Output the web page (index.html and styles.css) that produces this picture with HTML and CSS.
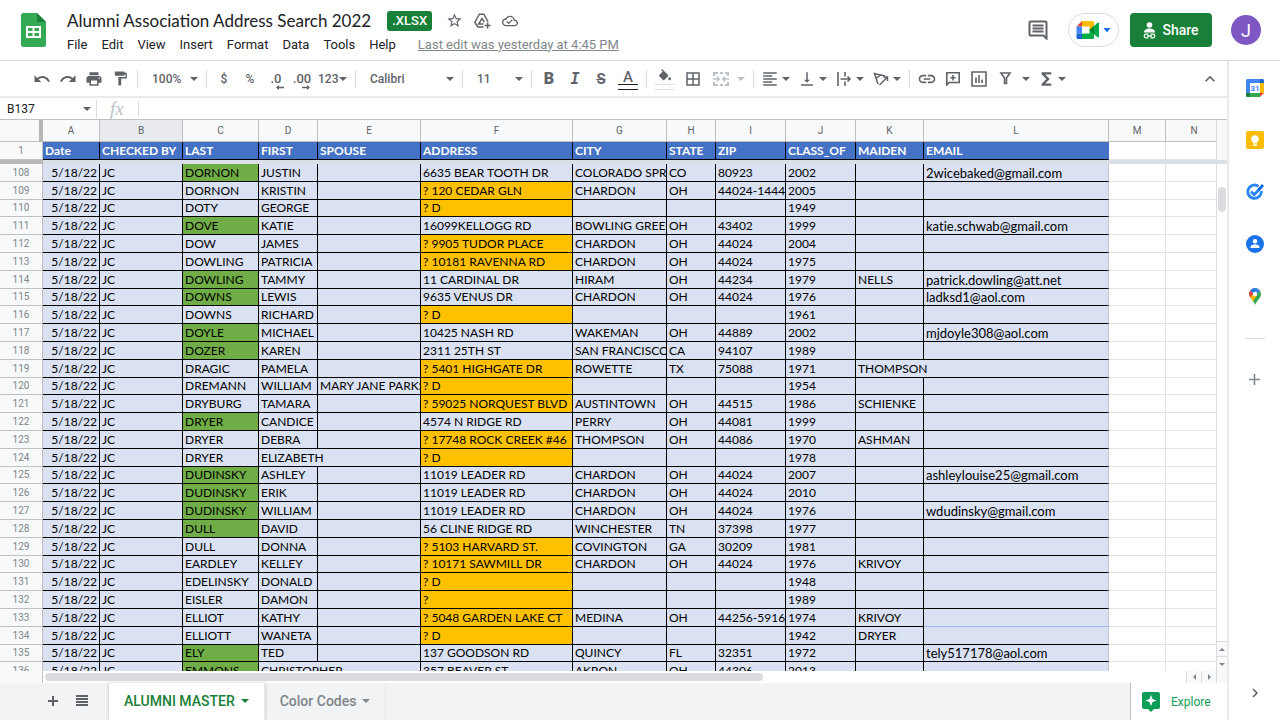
FILE: index.html
```html
<!DOCTYPE html>
<html lang="en">
<head>
  <meta charset="UTF-8"/>
  <title>Alumni Association Address Search 2022</title>
  <link rel="stylesheet" href="styles.css">
</head>
<body>

  <header class="header">
    <a href="#" class="logo" aria-label="Sheets home">
      <svg width="25" height="34" viewBox="0 0 25 34">
        <path fill="#34a853" d="M2.500 0H16l9 9v22.500a2.500 2.500 0 0 1-2.500 2.500h-20A2.500 2.500 0 0 1 0 31.500v-29A2.500 2.500 0 0 1 2.500 0z"/>
        <path fill="#188038" d="M16 0l9 9h-9z"/>
        <path fill="#fff" fill-rule="evenodd" d="M5 13h15v12H5zM7 15v3h4.500v-3zm6.500 0v3H18v-3zM7 20v3h4.500v-3zm6.500 0v3H18v-3z"/>
      </svg>
    </a>
    <div class="doc">
      <div class="doc-row">
        <h1>Alumni Association Address Search 2022</h1>
        <span class="badge">.XLSX</span>
        <button class="doc-btn" aria-label="Star">
          <svg width="17" height="17" viewBox="0 0 24 24"><path d="M22 9.240l-7.190-.62L12 2 9.190 8.630 2 9.240l5.460 4.730L5.820 21 12 17.270 18.180 21l-1.630-7.030L22 9.240zM12 15.400l-3.760 2.270 1-4.280-3.320-2.880 4.380-.38L12 6.100l1.710 4.040 4.380.38-3.320 2.880 1 4.280L12 15.400z"/></svg>
        </button>
        <button class="doc-btn" aria-label="Add shortcut to Drive">
          <svg width="18" height="18" viewBox="0 0 24 24" fill="none" stroke="#5f6368" stroke-width="2"><path d="M14 20H6.500L2.500 14 8.500 3h6l5.500 10"/><path d="M14 16H7.500L12 8.500l3 5" /><path d="M19.500 14v8M15.500 18h8"/></svg>
        </button>
        <button class="doc-btn" aria-label="Saved to Drive">
          <svg width="16" height="16" viewBox="0 0 24 24"><path d="M19.350 10.040C18.670 6.590 15.640 4 12 4 9.110 4 6.600 5.640 5.350 8.040 2.340 8.360 0 10.910 0 14c0 3.310 2.690 6 6 6h13c2.760 0 5-2.240 5-5 0-2.640-2.050-4.780-4.650-4.960zM19 18H6c-2.210 0-4-1.790-4-4 0-2.050 1.530-3.760 3.560-3.970l1.070-.11.5-.95C8.080 7.140 9.940 6 12 6c2.620 0 4.880 1.860 5.390 4.430l.3 1.500 1.530.11c1.560.1 2.780 1.410 2.780 2.960 0 1.650-1.350 3-3 3zm-9-3.820l-2.090-2.090L6.500 13.500 10 17l6.010-6.010-1.410-1.410z"/></svg>
        </button>
      </div>
      <nav class="menu">
        <button>File</button>
        <button>Edit</button>
        <button>View</button>
        <button>Insert</button>
        <button>Format</button>
        <button>Data</button>
        <button>Tools</button>
        <button>Help</button>
        <a href="#">Last edit was yesterday at 4:45 PM</a>
      </nav>
    </div>
    <div class="header-right">
      <button class="comments" aria-label="Open comment history">
        <svg width="20" height="20" viewBox="0 0 20 20" fill="none" stroke="#5f6368" stroke-width="2"><path d="M18.500 18.500l-3-3h-13a1 1 0 0 1-1-1v-12a1 1 0 0 1 1-1h15a1 1 0 0 1 1 1z"/><path d="M4.500 5.500h11M4.500 8.500h11M4.500 11.500h11"/></svg>
      </button>
      <button class="meet" aria-label="Join a call">
        <svg width="24" height="20" viewBox="0 0 24 20">
          <path fill="#ea4335" d="M0.500 6.500L6 1v5.500z"/>
          <path fill="#fbbc04" d="M6 1h10.500A1.500 1.500 0 0 1 18 2.500v6l-4.500 2v-4H6z"/>
          <path fill="#4285f4" d="M.5 6.500H6v7H.5z"/>
          <path fill="#1967d2" d="M.5 13.500H6V19H2a1.500 1.500 0 0 1-1.500-1.500z"/>
          <path fill="#00ac47" d="M6 13.500h7.500v-4L18 6l3.500-3.200c.6-.5 1.500-.1 1.500.7v13c0 .8-.9 1.200-1.500.7L18 14.200v3.300a1.500 1.500 0 0 1-1.500 1.500H6z"/>
          <path fill="#00832d" d="M13.500 10L18 6v8.200z"/>
        </svg>
        <svg width="8" height="5" viewBox="0 0 8 5"><path fill="#1a73e8" d="M.5 0h7L4 4.500z"/></svg>
      </button>
      <button class="share">
        <svg width="13" height="17" viewBox="0 0 13 17" fill="none"><circle cx="6.500" cy="3" r="2.800" fill="#fff"/><path fill="#fff" d="M1 10.500C1 7.500 4 6.500 6.500 6.500s5.500 1 5.500 4z"/><path stroke="#fff" stroke-width="1.300" d="M5.500 12.200H3a1.800 1.800 0 0 0 0 3.600h2.500M7.500 12.200H10a1.800 1.800 0 0 1 0 3.600H7.500M4 14h5"/></svg>
        Share
      </button>
      <button class="avatar" aria-label="Account">J</button>
    </div>
  </header>

  <div class="main">
    <div class="sheet">

      <div class="toolbar">
        <button aria-label="Undo"><svg width="18" height="18" viewBox="0 0 24 24"><path d="M12.500 8c-2.650 0-5.050.99-6.900 2.600L2 7v9h9l-3.620-3.620c1.390-1.160 3.160-1.880 5.120-1.880 3.540 0 6.550 2.310 7.600 5.500l2.370-.78C21.080 11.030 17.150 8 12.500 8z"/></svg></button>
        <button aria-label="Redo"><svg width="18" height="18" viewBox="0 0 24 24"><path d="M18.400 10.600C16.550 8.990 14.150 8 11.500 8c-4.650 0-8.580 3.030-9.960 7.220L3.900 16c1.050-3.190 4.050-5.500 7.600-5.500 1.950 0 3.730.72 5.120 1.880L13 16h9V7l-3.600 3.600z"/></svg></button>
        <button aria-label="Print"><svg width="18" height="18" viewBox="0 0 24 24"><path d="M19 8H5c-1.660 0-3 1.340-3 3v6h4v4h12v-4h4v-6c0-1.660-1.340-3-3-3zm-3 11H8v-5h8v5zm3-7c-.55 0-1-.45-1-1s.45-1 1-1 1 .45 1 1-.45 1-1 1zm-1-9H6v4h12V3z"/></svg></button>
        <button aria-label="Paint format"><svg width="17" height="17" viewBox="0 0 24 24"><path d="M18 4V3c0-.55-.45-1-1-1H5c-.55 0-1 .45-1 1v4c0 .55.45 1 1 1h12c.55 0 1-.45 1-1V6h1v4H9v11c0 .55.45 1 1 1h2c.55 0 1-.45 1-1v-9h8V4h-3z"/></svg></button>
        <span class="sep"></span>
        <select class="zoom" aria-label="Zoom"><option>100%</option></select>
        <span class="sep"></span>
        <button aria-label="Currency">$</button>
        <button aria-label="Percent">%</button>
        <button class="decimal" aria-label="Decrease decimal places">.0<svg width="8" height="5" viewBox="0 0 8 5"><path d="M0 2.500L3 0v1.700h5v1.600H3V5z"/></svg></button>
        <button class="decimal" aria-label="Increase decimal places">.00<svg width="8" height="5" viewBox="0 0 8 5"><path d="M8 2.500L5 0v1.700H0v1.600h5V5z"/></svg></button>
        <button class="split" aria-label="More formats">123<i class="arrow"></i></button>
        <span class="sep"></span>
        <select class="font" aria-label="Font"><option>Calibri</option></select>
        <span class="sep"></span>
        <select class="size" aria-label="Font size"><option>11</option></select>
        <span class="sep"></span>
        <button class="bold" aria-label="Bold">B</button>
        <button class="italic" aria-label="Italic">I</button>
        <button class="strike" aria-label="Strikethrough">S</button>
        <button class="color text-color" aria-label="Text color">A</button>
        <span class="sep"></span>
        <button class="color fill-color" aria-label="Fill color"><svg width="16" height="16" viewBox="0 0 24 24"><path d="M16.560 8.940L7.620 0 6.210 1.410l2.380 2.380-5.150 5.150c-.59.59-.59 1.540 0 2.120l5.500 5.500c.29.29.68.44 1.060.44s.77-.15 1.060-.44l5.500-5.500c.59-.58.59-1.530 0-2.120zM19 11.500s-2 2.170-2 3.500c0 1.100.9 2 2 2s2-.9 2-2c0-1.330-2-3.500-2-3.500z"/></svg></button>
        <button class="borders" aria-label="Borders"><svg width="18" height="18" viewBox="0 0 24 24"><path d="M3 3v18h18V3H3zm8 16H5v-6h6v6zm0-8H5V5h6v6zm8 8h-6v-6h6v6zm0-8h-6V5h6v6z"/></svg></button>
        <button class="split wide" disabled aria-label="Merge cells"><svg width="16" height="14" viewBox="0 0 16 14" fill="none" stroke="#bdc1c6" stroke-width="2"><path d="M1 4V1h4M7 1h3M12 1h3v3M1 10v3h4M7 13h3M12 13h3v-3"/><path stroke-width="1.500" d="M0 7h6M4 4.700L6.200 7 4 9.300M16 7h-6M12 4.700L9.800 7l2.200 2.300"/></svg><i class="arrow"></i></button>
        <span class="sep"></span>
        <div class="group">
          <button class="split" aria-label="Horizontal align"><svg width="18" height="18" viewBox="0 0 24 24"><path d="M15 15H3v2h12v-2zm0-8H3v2h12V7zM3 13h18v-2H3v2zm0 8h18v-2H3v2zM3 3v2h18V3H3z"/></svg><i class="arrow"></i></button>
          <button class="split" aria-label="Vertical align"><svg width="18" height="18" viewBox="0 0 24 24"><path d="M16 13h-3V3h-2v10H8l4 4 4-4zM4 19v2h16v-2H4z"/></svg><i class="arrow"></i></button>
          <button class="split" aria-label="Text wrapping"><svg width="18" height="14" viewBox="-2 0 18 14" fill="none" stroke="#5f6368" stroke-width="1.600"><path d="M1 0v14M8 0v4.500M8 9.500V14M3.500 7H13M10.500 4.500L13 7l-2.500 2.500"/></svg><i class="arrow"></i></button>
          <button class="split" aria-label="Text rotation"><svg width="18" height="14" viewBox="-1 0 18 14" fill="none" stroke="#5f6368" stroke-width="1.500"><path d="M5 12L1.500 1.500 12 4M3 6.500L7.500 3M6.500 13L14 5.500M10.500 5H14.500v4"/></svg><i class="arrow"></i></button>
        </div>
        <span class="sep"></span>
        <button aria-label="Insert link"><svg width="20" height="20" viewBox="0 0 24 24"><path d="M3.900 12c0-1.710 1.390-3.100 3.100-3.100h4V7H7c-2.760 0-5 2.240-5 5s2.240 5 5 5h4v-1.900H7c-1.710 0-3.100-1.390-3.100-3.100zM8 13h8v-2H8v2zm9-6h-4v1.900h4c1.710 0 3.100 1.390 3.100 3.100s-1.390 3.100-3.100 3.100h-4V17h4c2.760 0 5-2.240 5-5s-2.240-5-5-5z"/></svg></button>
        <button aria-label="Insert comment"><svg width="14" height="14" viewBox="0 0 14 14" fill="none" stroke="#5f6368" stroke-width="1.600"><path d="M.8 13V.8h12.400v9.700H3zM7 3v5.400M4.300 5.700h5.400"/></svg></button>
        <button aria-label="Insert chart"><svg width="16" height="16" viewBox="0 0 16 16" fill="none" stroke="#5f6368" stroke-width="1.600"><path d="M1 1h14v14H1zM5 6.500V12M8 4v8M11 8.500V12"/></svg></button>
        <button class="split wide" aria-label="Create a filter"><svg width="14" height="13" viewBox="0 0 14 13" fill="none" stroke="#5f6368" stroke-width="1.600"><path d="M3 1h9L8.500 6v5.500h-2V6z"/></svg><i class="arrow"></i></button>
        <button class="split" aria-label="Functions"><svg width="18" height="18" viewBox="0 0 24 24"><path d="M19 3H6v2.500l6.500 6.500L6 18.500V21h13v-3h-8l6-6-6-6h8z"/></svg><i class="arrow"></i></button>
        <button class="collapse" aria-label="Hide the menus"><svg width="20" height="20" viewBox="0 0 24 24"><path d="M12 8l-6 6 1.410 1.410L12 10.830l4.590 4.580L18 14z"/></svg></button>
      </div>

      <div class="formula-bar">
        <select class="name-box" aria-label="Name box"><option>B137</option></select>
        <label class="fx" for="formula">fx</label>
        <input class="formula" id="formula" type="text">
      </div>

      <div class="grid">
        <div class="viewport">
          <table id="alumniTable">
            <colgroup>
              <col class="w-num"><col class="w-a"><col class="w-b"><col class="w-c"><col class="w-d">
              <col class="w-e"><col class="w-f"><col class="w-g"><col class="w-h"><col class="w-i">
              <col class="w-j"><col class="w-k"><col class="w-l"><col class="w-m"><col>
            </colgroup>
            <thead>
              <tr class="letters">
                <th class="corner"></th>
                <th>A</th><th class="active">B</th><th>C</th><th>D</th><th>E</th><th>F</th><th>G</th>
                <th>H</th><th>I</th><th>J</th><th>K</th><th>L</th><th>M</th><th>N</th>
              </tr>
              <tr class="titles">
                <th class="num">1</th>
                <th>Date</th><th>CHECKED BY</th><th>LAST</th><th>FIRST</th><th>SPOUSE</th><th>ADDRESS</th><th>CITY</th>
                <th>STATE</th><th>ZIP</th><th>CLASS_OF</th><th>MAIDEN</th><th class="last">EMAIL</th>
                <td class="blank"></td><td class="blank"></td>
              </tr>
              <tr class="freeze"><td></td><td colspan="14"></td></tr>
            </thead>
            <tbody>
              <!-- rows come from script.js -->
            </tbody>
          </table>
        </div>
        <div class="vscroll">
          <div class="vscroll-top"></div>
          <div class="vscroll-track"><div class="vscroll-thumb"></div></div>
          <button class="up" aria-label="Scroll up"></button>
          <button class="down" aria-label="Scroll down"></button>
        </div>
      </div>

      <div class="hscroll">
        <div class="hscroll-track"><div class="hscroll-thumb"></div></div>
        <button class="left" aria-label="Scroll left"></button>
        <button class="right" aria-label="Scroll right"></button>
        <span class="hscroll-end"></span>
      </div>

      <footer class="tabs">
        <button class="tab-icon" aria-label="Add sheet"><svg width="10" height="10" viewBox="0 0 10 10"><path d="M4 0h2v4h4v2H6v4H4V6H0V4h4z"/></svg></button>
        <button class="tab-icon" aria-label="All sheets"><svg width="12" height="11" viewBox="0 0 12 11"><path d="M0 0h12v2H0zM0 3h12v2H0zM0 6h12v2H0zM0 9h12v2H0z"/></svg></button>
        <button class="tab current">ALUMNI MASTER<i class="arrow"></i></button>
        <button class="tab">Color Codes<i class="arrow"></i></button>
        <button class="explore">
          <svg width="18" height="20" viewBox="0 0 18 20"><path fill="#0f9d58" d="M2 0h14a2 2 0 0 1 2 2v13a2 2 0 0 1-2 2h-4l-3 3-3-3H2a2 2 0 0 1-2-2V2a2 2 0 0 1 2-2z"/><path fill="#fff" d="M9 3l1.500 4L14.500 8.500l-4 1.500L9 14l-1.500-4-4-1.500 4-1.500z"/></svg>
          Explore
        </button>
      </footer>
    </div>

    <aside class="side">
      <button aria-label="Calendar"><svg width="18" height="18" viewBox="0 0 18 18"><path fill="#4285f4" d="M1.500 0H14v4H4v10H0V1.500A1.500 1.500 0 0 1 1.500 0z"/><path fill="#1967d2" d="M14 0h2.500A1.500 1.500 0 0 1 18 1.500V4h-4z"/><path fill="#fbbc04" d="M14 4h4v10h-4z"/><path fill="#34a853" d="M4 14h10v4H4z"/><path fill="#188038" d="M0 14h4v4H1.500A1.500 1.500 0 0 1 0 16.500z"/><path fill="#ea4335" d="M14 14h4l-4 4z"/><path fill="#fff" d="M4 4h10v10H4z"/><text class="cal-day" x="9" y="12" text-anchor="middle">31</text></svg></button>
      <button aria-label="Keep"><svg width="18" height="18" viewBox="0 0 18 18"><rect width="18" height="18" rx="2" fill="#fbbc04"/><circle cx="9" cy="8" r="3.800" fill="#fff"/><path fill="#fff" d="M7 10h4v2.500H7zM7 13.200h4v1.500H7z"/></svg></button>
      <button aria-label="Tasks"><svg width="18" height="18" viewBox="0 0 18 18" fill="none"><path stroke="#2684fc" stroke-width="2.800" d="M12.500 3.300A6.700 6.700 0 1 0 15.200 8"/><path stroke="#2684fc" stroke-width="2.800" d="M5 8.500l3.200 3.200L13 6.500"/><path stroke="#0066da" stroke-width="2.800" d="M12.500 7L17 2"/></svg></button>
      <button aria-label="Contacts"><svg width="18" height="18" viewBox="0 0 18 18"><circle cx="9" cy="9" r="9" fill="#1a73e8"/><circle cx="9" cy="6.300" r="2.200" fill="#fff"/><path fill="#fff" d="M4.500 13v-1c0-1.800 2.700-2.700 4.500-2.700s4.500.9 4.500 2.700v1z"/></svg></button>
      <button aria-label="Maps"><svg width="12" height="17" viewBox="0 0 12 17"><path fill="#34a853" d="M6 0a6 6 0 0 1 6 6c0 4.500-4.500 6.500-6 11C5 13.500 3 12 1.600 9.900z"/><path fill="#fbbc04" d="M1.400 9.600L4.200 6l3.500 1.500-3.500 5.700C3.200 12 2.200 11 1.400 9.600z"/><path fill="#ea4335" d="M1.400 2.200L4.500 5 1.400 9.700C.5 8.500 0 7.300 0 6s.5-2.800 1.400-3.800z"/><path fill="#1a73e8" d="M1.400 2.200A6 6 0 0 1 6 0l1 2-3 3.300z"/><path fill="#4285f4" d="M6 0a6 6 0 0 1 5 2.800L7.500 6.500 4.200 4.500 7.800.3z"/><circle cx="6" cy="6" r="2.200" fill="#fff"/></svg></button>
      <hr>
      <button aria-label="Get add-ons"><svg width="11" height="11" viewBox="0 0 11 11"><path fill="#80868b" d="M4.700 0h1.600v4.700H11v1.600H6.300V11H4.700V6.300H0V4.700h4.700z"/></svg></button>
      <button class="side-hide" aria-label="Hide side panel"><svg width="18" height="18" viewBox="0 0 24 24"><path d="M10 6L8.590 7.410 13.170 12l-4.580 4.590L10 18l6-6z"/></svg></button>
    </aside>
  </div>

  <script src="script.js"></script>
</body>
</html>
```
FILE: styles.css
```css
* {
  box-sizing: border-box;
}

body {
  margin: 0;
  height: 100vh;
  display: flex;
  flex-direction: column;
  overflow: hidden;
  font-family: Roboto, Arial, sans-serif;
  color: #202124;
  background: #fff;
}

button {
  font-family: inherit;
  padding: 0;
  border: none;
  background: none;
  cursor: pointer;
}

svg {
  display: block;
  fill: #5f6368;
}

svg[fill="none"] {
  fill: none;
}

.arrow {
  border: 4px solid transparent;
  border-top-color: #5f6368;
  border-bottom: none;
}

/* header */

.header {
  display: flex;
  flex: none;
  height: 61px;
  border-bottom: 1px solid #dadce0;
}

.logo {
  padding: 13px 21px 0 21px;
}

.doc {
  padding-top: 8px;
}

.doc-row {
  display: flex;
  align-items: center;
  height: 25px;
}

h1 {
  margin: 0 16px 0 0;
  font-family: Lato, sans-serif;
  font-size: 17px;
  font-weight: 400;
  white-space: nowrap;
}

.badge {
  padding: 0 5px;
  margin-right: 12px;
  border-radius: 3px;
  background: #188038;
  color: #fff;
  font-size: 13px;
  font-weight: 500;
  line-height: 20px;
}

.doc-btn {
  width: 20px;
  margin-right: 8px;
  display: flex;
  justify-content: center;
}

.menu {
  display: flex;
  gap: 14px;
  height: 22px;
  align-items: center;
  white-space: nowrap;
}

.menu button {
  font-size: 13px;
  color: #202124;
}

.menu a {
  margin-left: 8px;
  font-size: 13px;
  color: #80868b;
}

.header-right {
  display: flex;
  align-items: center;
  margin-left: auto;
  padding-right: 19px;
}

.comments {
  margin-right: 20px;
}

.meet {
  display: flex;
  align-items: center;
  justify-content: center;
  gap: 3px;
  width: 51px;
  height: 34px;
  margin-right: 11px;
  border: 1px solid #dadce0;
  border-radius: 17px;
}

.share {
  display: flex;
  align-items: center;
  justify-content: center;
  gap: 6px;
  width: 82px;
  height: 34px;
  margin-right: 19px;
  border-radius: 4px;
  background: #188038;
  color: #fff;
  font-size: 14px;
  font-weight: 500;
}

.avatar {
  width: 30px;
  height: 30px;
  border-radius: 50%;
  background: #7e57c2;
  color: #fff;
  font-size: 18px;
}

/* page body */

.main {
  display: flex;
  flex: 1;
  min-height: 0;
}

.sheet {
  display: flex;
  flex-direction: column;
  flex: 1;
  min-width: 0;
}

/* toolbar */

.toolbar {
  display: flex;
  align-items: center;
  flex: none;
  height: 37px;
  padding-left: 29px;
  border-bottom: 2px solid #e8eaed;
  color: #5f6368;
}

.toolbar button {
  display: flex;
  align-items: center;
  justify-content: center;
  width: 26px;
  height: 26px;
  color: #5f6368;
  font-size: 12px;
  font-weight: 500;
}

.sep {
  width: 1px;
  height: 18px;
  margin: 0 4px;
  background: #dadce0;
}

select {
  appearance: none;
  border: none;
  border-radius: 0;
  background: url("data:image/svg+xml,%3Csvg xmlns='http://www.w3.org/2000/svg' width='8' height='4'%3E%3Cpath fill='%235f6368' d='M0 0h8L4 4z'/%3E%3C/svg%3E") no-repeat right 4px center;
  color: #5f6368;
  font-family: inherit;
  font-size: 12px;
  font-weight: 500;
}

.zoom, .size {
  width: 60px;
  padding: 0 0 0 10px;
}

.font {
  width: 98px;
  padding: 0 0 0 10px;
}

.toolbar .decimal {
  position: relative;
  font-size: 13px;
}

.decimal svg {
  position: absolute;
  right: 5px;
  bottom: 2px;
}

.toolbar .split {
  width: 36px;
  justify-content: space-between;
  padding: 0 4px 0 3px;
}

.toolbar .wide {
  width: 42px;
  padding: 0 4px 0 6px;
}

.split:disabled .arrow {
  border-top-color: #bdc1c6;
}

.group {
  display: flex;
  gap: 1px;
}

.toolbar .bold {
  font-size: 16px;
  font-weight: 900;
}

.toolbar .italic {
  font-family: "DejaVu Sans Mono", monospace;
  font-size: 15px;
  font-weight: 700;
  font-style: italic;
}

.toolbar .strike {
  font-size: 15px;
  font-weight: 700;
  text-decoration: line-through;
}

.toolbar .color {
  position: relative;
  width: 28px;
  font-size: 15px;
  padding-bottom: 3px;
}

.color::after {
  content: "";
  position: absolute;
  left: 4px;
  right: 4px;
  bottom: 2px;
  height: 4px;
  border-top: 1px solid #202124;
  border-bottom: 1px solid #202124;
}

.fill-color::after {
  border-color: #d9e1f2;
}

.toolbar .borders {
  width: 28px;
}

.toolbar .collapse {
  margin-left: auto;
  margin-right: 4px;
}

/* formula bar */

.formula-bar {
  display: flex;
  align-items: center;
  flex: none;
  height: 22px;
  border-bottom: 1px solid #c0c0c0;
}

.name-box {
  width: 97px;
  height: 18px;
  padding: 0 0 0 7px;
  border-right: 1px solid #dadce0;
  background-position: right 5px center;
  color: #202124;
  font-weight: 400;
}

.fx {
  width: 42px;
  padding-left: 13px;
  border-right: 1px solid #dadce0;
  color: #bdc1c6;
  font-family: "Liberation Serif", serif;
  font-size: 19px;
  font-style: italic;
  line-height: 16px;
}

.formula {
  flex: 1;
  height: 18px;
  border: none;
  outline: none;
}

/* grid */

.grid {
  display: flex;
  flex: 1;
  min-height: 0;
}

.viewport {
  flex: 1;
  min-width: 0;
  overflow: hidden;
  border-right: 1px solid #dadce0;
}

table {
  width: 100%;
  min-width: 1223px;
  table-layout: fixed;
  border-spacing: 0;
  font-family: Lato, sans-serif;
  font-size: 12px;
  font-variant-ligatures: none;
  line-height: 16px;
}

.w-num { width: 43px; }
.w-a { width: 57px; }
.w-b { width: 83px; }
.w-c { width: 76px; }
.w-d { width: 59px; }
.w-e { width: 103px; }
.w-f { width: 152px; }
.w-g { width: 94px; }
.w-h { width: 49px; }
.w-i { width: 70px; }
.w-j { width: 70px; }
.w-k { width: 68px; }
.w-l { width: 185px; }
.w-m { width: 57px; }

th, td {
  height: 18px;
  padding: 0 0 0 2px;
  overflow: hidden;
  white-space: nowrap;
  text-align: left;
  border-right: 1px solid #000;
  border-bottom: 1px solid #000;
}

tbody td {
  color: #000;
}

.letters th {
  height: 22px;
  padding: 0;
  background: #f8f9fa;
  border-color: #c0c0c0;
  color: #5f6368;
  font-family: Roboto, sans-serif;
  font-size: 10px;
  font-weight: 400;
  text-align: center;
}

.letters .corner {
  border-right: 4px solid #b7b7b7;
}

.letters .active {
  background: #e8eaed;
}

.titles th {
  background: #4472c4;
  color: #fff;
}

.titles .last {
  border-right-color: #4472c4;
}

.freeze td {
  height: 4px;
  padding: 0;
  border: none;
  background: #dadfe8;
}

.freeze td:first-child {
  background: #b7b7b7;
}

tbody td {
  background: #d9e1f2;
}

tr .num {
  padding: 0;
  background: #f8f9fa;
  border-color: #c0c0c0;
  color: #80868b;
  font-family: Roboto, sans-serif;
  font-size: 10px;
  font-weight: 400;
  line-height: 14px;
  text-align: center;
}

tr .blank {
  background: #fff;
  border-color: #e2e3e3;
}

tbody tr:nth-child(5n+3) > * {
  height: 17px;
}

tbody .date {
  padding: 0 2px 0 0;
  text-align: right;
}

tbody .found {
  background: #70ad47;
}

tbody .unsure {
  background: #ffc000;
}

.email {
  border-right-color: #c0c8d8;
  font-size: 13px;
}

.maiden {
  border-right-color: #c0c8d8;
}

.edge {
  border-bottom-color: #a4b8f0;
}

/* scroll bars */

.vscroll {
  display: flex;
  flex-direction: column;
  width: 10px;
}

.vscroll-top {
  height: 44px;
  background: #f8f9fa;
  border-bottom: 4px solid #dadfe8;
}

.vscroll-track {
  flex: 1;
  padding: 23px 1px 0;
}

.vscroll-thumb {
  height: 25px;
  border-radius: 4px;
  background: #dadce0;
}

.vscroll button, .hscroll button {
  display: flex;
  align-items: center;
  justify-content: center;
  width: 15px;
  background: #f8f9fa;
  border-left: 1px solid #dadce0;
}

.vscroll button {
  width: 10px;
  height: 15px;
  border-left: none;
  border-top: 1px solid #dadce0;
}

.vscroll button::before, .hscroll button::before {
  content: "";
  border: 3px solid transparent;
}

.vscroll .up::before {
  border-top: none;
  border-bottom-color: #80868b;
}

.vscroll .down::before {
  border-bottom: none;
  border-top-color: #80868b;
}

.hscroll .left::before {
  border-left: none;
  border-right-color: #80868b;
}

.hscroll .right::before {
  border-right: none;
  border-left-color: #80868b;
}

.hscroll {
  display: flex;
  flex: none;
  height: 12px;
  padding-left: 42px;
  background: #f8f9fa;
}

.hscroll-track {
  flex: 1;
  padding: 2px;
  border-left: 1px solid #c0c0c0;
  background: #fff;
}

.hscroll-thumb {
  width: 63%;
  height: 8px;
  border-radius: 4px;
  background: #dadce0;
}

.hscroll-end {
  width: 11px;
  border-left: 1px solid #dadce0;
}

/* sheet tabs */

.tabs {
  display: flex;
  flex: none;
  height: 37px;
  padding-left: 38px;
  background: #f1f3f4;
}

.tabs button {
  display: flex;
  align-items: center;
}

.tab-icon {
  width: 29px;
  padding-bottom: 2px;
  justify-content: center;
}

.tabs .tab {
  gap: 6px;
  padding: 0 15px 2px;
  border-right: 1px solid #e8eaed;
  color: #80868b;
  font-size: 14px;
  font-weight: 500;
}

.tab .arrow {
  border-top-color: #80868b;
}

.tabs .current {
  margin-left: 13px;
  background: #fff;
  color: #188038;
  box-shadow: 0 0 3px rgba(60, 64, 67, 0.3);
}

.current .arrow {
  border-top-color: #188038;
}

.tabs .explore {
  gap: 11px;
  width: 97px;
  margin-left: auto;
  padding-left: 11px;
  border-left: 1px solid #c0c0c0;
  background: #fff;
  color: #0f9d58;
  font-size: 12px;
}

/* side panel */

.side {
  display: flex;
  flex-direction: column;
  align-items: center;
  gap: 28px;
  width: 53px;
  padding-top: 15px;
  border-left: 2px solid #e8eaed;
}

.side button {
  display: flex;
  align-items: center;
  justify-content: center;
  width: 24px;
  height: 24px;
  flex: none;
}

.cal-day {
  fill: #4285f4;
  font-size: 8px;
  font-weight: 700;
}

.side hr {
  width: 20px;
  margin: 2px 0 0;
  border: none;
  border-top: 1px solid #dadce0;
}

.side .side-hide {
  margin: auto 0 15px;
}
```
FILE: script.js
```js
// number, last, first, spouse, address, city, state, zip, class, maiden, email
// "*" before a last name: address confirmed
const people = [
  [108, "*DORNON", "JUSTIN", "", "6635 BEAR TOOTH DR", "COLORADO SPRI", "CO", "80923", "2002", "", "2wicebaked@gmail.com"],
  [109, "DORNON", "KRISTIN", "", "? 120 CEDAR GLN", "CHARDON", "OH", "44024-1444", "2005", "", ""],
  [110, "DOTY", "GEORGE", "", "? D", "", "", "", "1949", "", ""],
  [111, "*DOVE", "KATIE", "", "16099KELLOGG RD", "BOWLING GREEN", "OH", "43402", "1999", "", "katie.schwab@gmail.com"],
  [112, "DOW", "JAMES", "", "? 9905 TUDOR PLACE", "CHARDON", "OH", "44024", "2004", "", ""],
  [113, "DOWLING", "PATRICIA", "", "? 10181 RAVENNA RD", "CHARDON", "OH", "44024", "1975", "", ""],
  [114, "*DOWLING", "TAMMY", "", "11 CARDINAL DR", "HIRAM", "OH", "44234", "1979", "NELLS", "patrick.dowling@att.net"],
  [115, "*DOWNS", "LEWIS", "", "9635 VENUS DR", "CHARDON", "OH", "44024", "1976", "", "ladksd1@aol.com"],
  [116, "DOWNS", "RICHARD", "", "? D", "", "", "", "1961", "", ""],
  [117, "*DOYLE", "MICHAEL", "", "10425 NASH RD", "WAKEMAN", "OH", "44889", "2002", "", "mjdoyle308@aol.com"],
  [118, "*DOZER", "KAREN", "", "2311 25TH ST", "SAN FRANCISCO", "CA", "94107", "1989", "", ""],
  [119, "DRAGIC", "PAMELA", "", "? 5401 HIGHGATE DR", "ROWETTE", "TX", "75088", "1971", "THOMPSON", ""],
  [120, "DREMANN", "WILLIAM", "MARY JANE PARKS", "? D", "", "", "", "1954", "", ""],
  [121, "DRYBURG", "TAMARA", "", "? 59025 NORQUEST BLVD", "AUSTINTOWN", "OH", "44515", "1986", "SCHIENKE", ""],
  [122, "*DRYER", "CANDICE", "", "4574 N RIDGE RD", "PERRY", "OH", "44081", "1999", "", ""],
  [123, "DRYER", "DEBRA", "", "? 17748 ROCK CREEK #46", "THOMPSON", "OH", "44086", "1970", "ASHMAN", ""],
  [124, "DRYER", "ELIZABETH", "", "? D", "", "", "", "1978", "", ""],
  [125, "*DUDINSKY", "ASHLEY", "", "11019 LEADER RD", "CHARDON", "OH", "44024", "2007", "", "ashleylouise25@gmail.com"],
  [126, "*DUDINSKY", "ERIK", "", "11019 LEADER RD", "CHARDON", "OH", "44024", "2010", "", ""],
  [127, "*DUDINSKY", "WILLIAM", "", "11019 LEADER RD", "CHARDON", "OH", "44024", "1976", "", "wdudinsky@gmail.com"],
  [128, "*DULL", "DAVID", "", "56 CLINE RIDGE RD", "WINCHESTER", "TN", "37398", "1977", "", ""],
  [129, "DULL", "DONNA", "", "? 5103 HARVARD ST.", "COVINGTON", "GA", "30209", "1981", "", ""],
  [130, "EARDLEY", "KELLEY", "", "? 10171 SAWMILL DR", "CHARDON", "OH", "44024", "1976", "KRIVOY", ""],
  [131, "EDELINSKY", "DONALD", "", "? D", "", "", "", "1948", "", ""],
  [132, "EISLER", "DAMON", "", "?", "", "", "", "1989", "", ""],
  [133, "ELLIOT", "KATHY", "", "? 5048 GARDEN LAKE CT", "MEDINA", "OH", "44256-5916", "1974", "KRIVOY", ""],
  [134, "ELLIOTT", "WANETA", "", "? D", "", "", "", "1942", "DRYER", ""],
  [135, "*ELY", "TED", "", "137 GOODSON RD", "QUINCY", "FL", "32351", "1972", "", "tely517178@aol.com"],
  [136, "*EMMONS", "CHRISTOPHER", "", "357 BEAVER ST", "AKRON", "OH", "44306", "2013", "", ""]
];

// long values run over the empty cell to their right
const spills = ["ELIZABETH", "CHRISTOPHER", "THOMPSON"];

const tableBody = document.querySelector("#alumniTable tbody");

people.forEach(person => {
  const row = document.createElement("tr");
  let html = `<th class="num">${person[0]}</th><td class="date">5/18/22</td><td>JC</td>`;
  for (let i = 1; i < person.length; i++) {
    let text = person[i];
    let cls = "";
    if (text.startsWith("*")) {
      text = text.slice(1);
      cls = "found";
    }
    if (i === 4 && text.startsWith("?")) cls = "unsure";
    if (i === 10) cls = person[0] === 133 ? "email edge" : "email";
    if (spills.includes(text) && (i === 2 || i === 9)) {
      html += `<td colspan="2" class="${i === 9 ? "maiden" : ""}">${text}</td>`;
      i++;
    } else {
      html += `<td class="${cls}">${text}</td>`;
    }
  }
  row.innerHTML = html + `<td class="blank"></td><td class="blank"></td>`;
  tableBody.appendChild(row);
});
```
